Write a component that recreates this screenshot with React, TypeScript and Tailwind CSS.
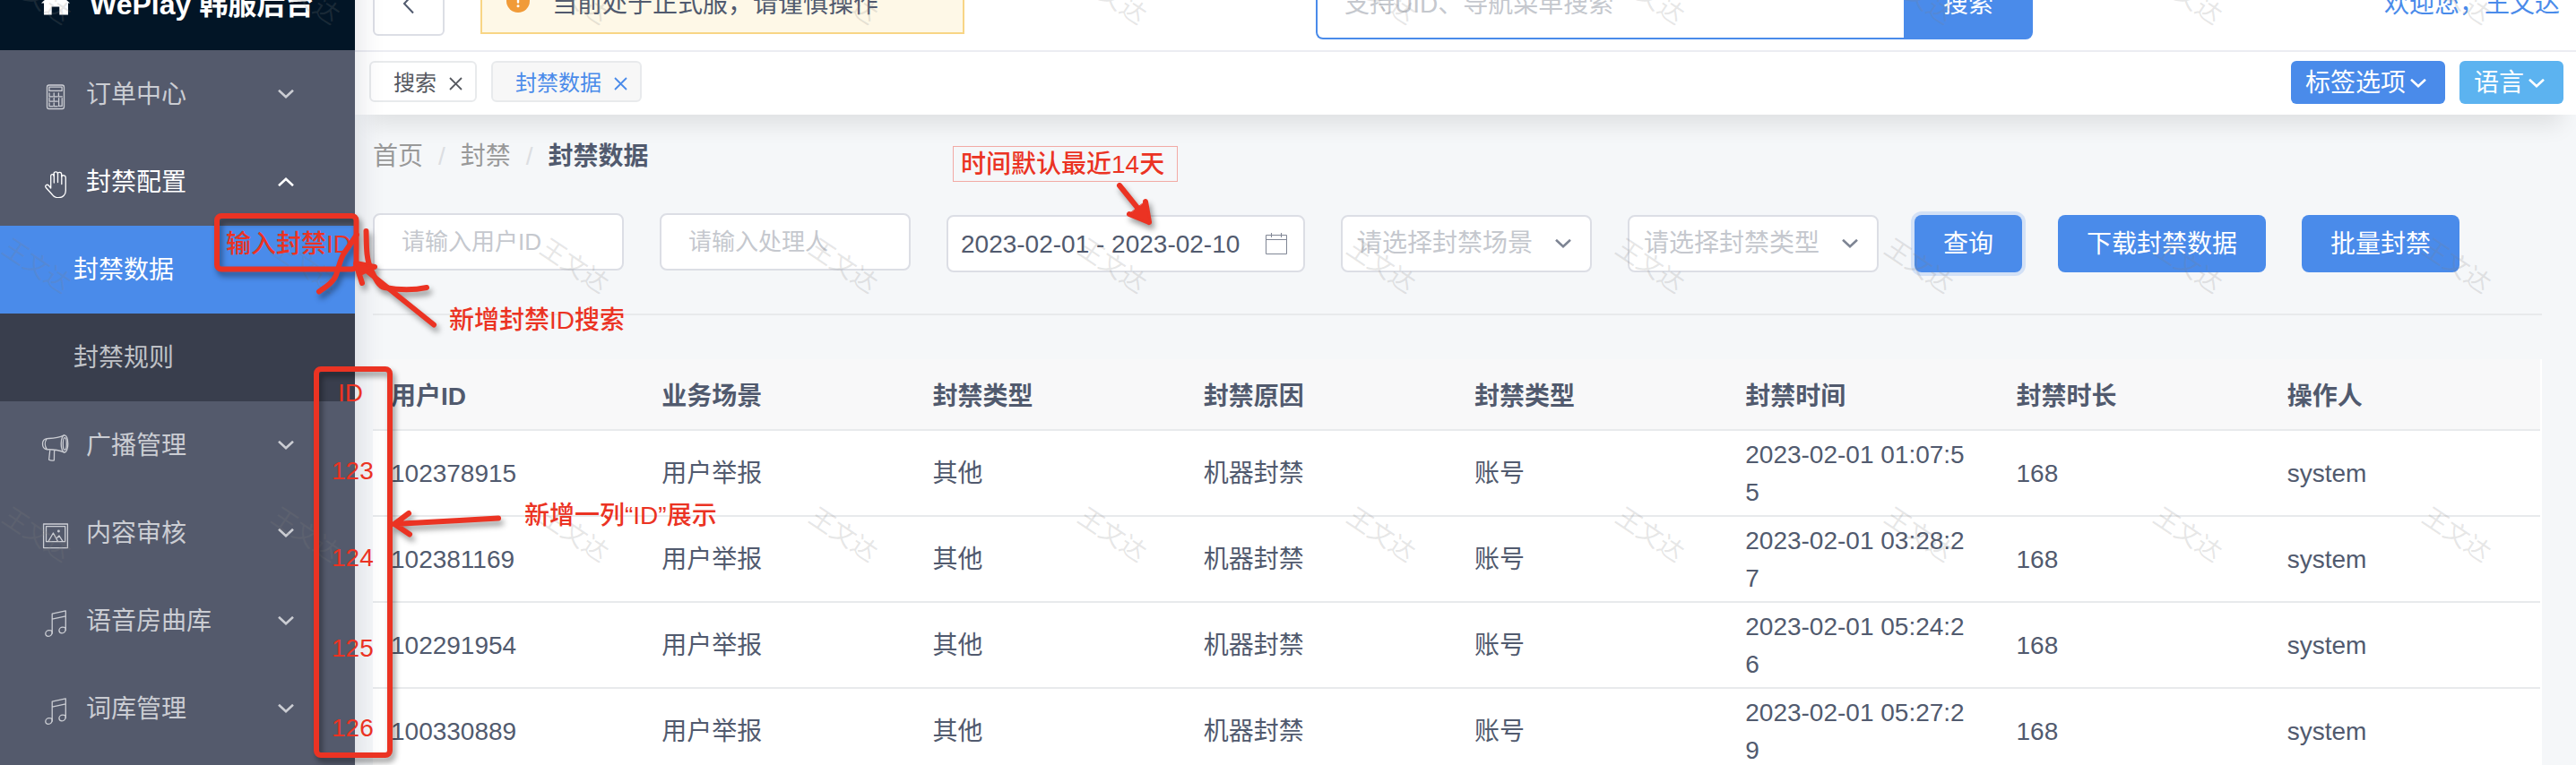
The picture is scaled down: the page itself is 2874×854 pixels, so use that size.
import React from "react";

const fontStack =
  "font-['Liberation_Sans','Noto_Sans_CJK_SC',sans-serif]";

function Chevron({ className = "", up = false }: { className?: string; up?: boolean }) {
  return (
    <svg className={`h-2.5 w-[18px] shrink-0 ${className}`} viewBox="0 0 18 10" fill="none" stroke="currentColor" strokeWidth="2.6" aria-hidden="true">
      <path d={up ? "M1 9.2 9 1.8 17 9.2" : "M1 .8 9 8.2 17 .8"} />
    </svg>
  );
}

function CloseIcon() {
  return (
    <svg className="h-[15px] w-[15px] shrink-0" viewBox="0 0 15 15" fill="none" stroke="currentColor" strokeWidth="1.8" aria-hidden="true">
      <path d="M1 1 14 14M14 1 1 14" />
    </svg>
  );
}

function MenuIcon({ children }: { children: React.ReactNode }) {
  return (
    <svg className="h-9 w-8 shrink-0" viewBox="0 0 32 36" fill="none" stroke="currentColor" strokeWidth="1.3" strokeLinejoin="round" strokeLinecap="round" aria-hidden="true">
      {children}
    </svg>
  );
}

const CalculatorIcon = () => (
  <MenuIcon>
    <rect x="6.5" y="8" width="19" height="26.5" rx="2.2" />
    <rect x="8.9" y="10.2" width="14.2" height="4.2" />
    <path d="M9 17v3.8h4M14.2 17v3.8h4M19.4 17v3.8h4M9 22.4v3.8h4M14.2 22.4v3.8h4M9 27.8v3.8h4M14.2 27.8v3.8h4M19.6 22.6v8.8h3.6v-8.8" />
  </MenuIcon>
);

const HandIcon = () => (
  <MenuIcon>
    <path d="M10.7 25V11.5c0-2.6 3.4-2.6 3.4 0V9c0-2.8 4.3-2.8 4.3 0 0-2.4 4.3-2.2 4.3.6V12c.4-1.8 4.6-1.8 4.6 1.4V28c0 4.5-3.3 7.7-8 7.7-3.5 0-5.3-1-7-3.4L5.3 24.5c-1.6-2.3.9-4.2 3-2.5z" />
    <path d="M14.3 9.5V19M18.5 9V18.5M22.8 11V20.5" />
  </MenuIcon>
);

const MegaphoneIcon = () => (
  <MenuIcon>
    <ellipse cx="26" cy="16.4" rx="3.8" ry="9.6" />
    <ellipse cx="26.3" cy="16.4" rx="2" ry="6.8" />
    <path d="M25.5 6.8C18 10.5 12 10.3 6.3 10.6c-3 .4-4.8 3-4.8 6 0 3.2 1.8 5.9 5 6.2 6-.2 12 .2 19 3.2M6.3 10.6c-2.6 3.6-2.6 8.6.2 12.2M9.8 23l-1.2 11.2c1.8 1 4 1 5.8.6L14.6 23.2" />
  </MenuIcon>
);

const PictureIcon = () => (
  <MenuIcon>
    <rect x="2.6" y="8" width="26.8" height="26.6" />
    <rect x="5.5" y="10.6" width="21.2" height="17" />
    <path d="M8 27.4 13.4 18 18.5 27.4M16.8 24.2 20 21 24 27.4" />
    <circle cx="19.4" cy="16" r=".8" />
  </MenuIcon>
);

const MusicIcon = () => (
  <MenuIcon>
    <path d="M12.2 32V10.2L27.3 6.8V28.5M12.2 16.2 27.3 12.8" />
    <path d="M12.2 30.5c0 3-2 4.8-4.2 4.8s-3.2-1.5-3.2-3c0-2 2-3.6 4-3.6 1.8 0 3.4.8 3.4 1.8zM27.3 27c0 3-2 4.8-4.2 4.8s-3.2-1.5-3.2-3c0-2 2-3.6 4-3.6 1.8 0 3.4.8 3.4 1.8z" />
  </MenuIcon>
);

const menuTop = [
  { label: "订单中心", icon: <CalculatorIcon />, open: false },
  { label: "封禁配置", icon: <HandIcon />, open: true },
];

const menuBottom = [
  { label: "广播管理", icon: <MegaphoneIcon />, open: false },
  { label: "内容审核", icon: <PictureIcon />, open: false },
  { label: "语音房曲库", icon: <MusicIcon />, open: false },
  { label: "词库管理", icon: <MusicIcon />, open: false },
];

function MenuItem({ label, icon, open }: { label: string; icon: React.ReactNode; open: boolean }) {
  return (
    <button
      type="button"
      aria-expanded={open}
      className={`flex h-[98px] w-full items-center pr-[68px] pl-[46px] text-left ${open ? "text-white" : "text-[#cbcdd3]"}`}
    >
      {icon}
      <span className="ml-[18px] flex-1 pt-0.5">{label}</span>
      <Chevron up={open} />
    </button>
  );
}

function Sidebar() {
  return (
    <aside className="relative z-10 w-[396px] shrink-0 bg-[#545a6c] shadow-[4px_0_28px_rgba(30,40,70,0.13)]">
      <div className="flex h-26 items-center bg-[#021526] pl-[46px] text-[32px] font-bold text-white">
        <svg className="mr-[22px] h-8 w-8" viewBox="0 0 32 32" fill="currentColor" aria-hidden="true">
          <path d="M16 1 0 15.5h3V28.5h8.7V19.5h8.6v9H30V15.5h2z" />
        </svg>
        <span className="pt-0.5">WePlay 韩服后台</span>
      </div>
      <nav>
        {menuTop.map((m) => (
          <MenuItem key={m.label} {...m} />
        ))}
        <a href="#data" className="flex h-[98px] items-center bg-[#4a8bea] pt-0.5 pl-[82px] text-white">
          封禁数据
        </a>
        <a href="#rules" className="flex h-[98px] items-center bg-[#393e4d] pt-0.5 pl-[82px] text-[#bfc1c6]">
          封禁规则
        </a>
        {menuBottom.map((m) => (
          <MenuItem key={m.label} {...m} />
        ))}
      </nav>
    </aside>
  );
}

function Header() {
  return (
    <header className="flex h-[106px] items-center justify-between border-b-2 border-[#ebecf2] bg-white pr-[18px] pl-5">
      <div className="flex items-center gap-10">
        <button type="button" aria-label="返回" className="flex h-[72px] w-20 items-center justify-center rounded-md border-2 border-[#dcdee5] text-[#515a6e]">
          <svg className="h-6 w-4" viewBox="0 0 16 24" fill="none" stroke="currentColor" strokeWidth="2" aria-hidden="true">
            <path d="M13 1.5 3 12 13 22.5" />
          </svg>
        </button>
        <div role="status" className="flex h-[68px] w-[540px] items-center border-2 border-[#f8d585] bg-[#fef8e7] pl-[27px]">
          <svg className="mr-[25px] h-8 w-[26px] shrink-0" viewBox="0 0 26 32" aria-hidden="true">
            <circle cx="13" cy="13" r="13" fill="#f19b38" />
            <path d="M13 5.5v9" stroke="#fff" strokeWidth="2.4" strokeLinecap="round" />
            <circle cx="13" cy="18.8" r="1.5" fill="#fff" />
          </svg>
          <span className="pt-0.5">当前处于正式服，请谨慎操作</span>
        </div>
      </div>
      <form className="flex h-20 w-[800px]" onSubmit={(e) => e.preventDefault()}>
        <input
          aria-label="搜索"
          placeholder="支持UID、导航菜单搜索"
          className="min-w-0 flex-1 rounded-l-lg border-2 border-r-0 border-[#4a8bea] bg-white pt-0.5 pl-[30px] outline-none placeholder:text-[#c5c8ce]"
        />
        <button type="submit" className="w-36 rounded-r-lg bg-[#4a8bea] pt-0.5 text-white">
          搜索
        </button>
      </form>
      <a href="#me" className="pt-0.5 text-[#4a8bea]">
        欢迎您，王文达
      </a>
    </header>
  );
}

function TagBar() {
  return (
    <div className="flex h-[70px] items-start justify-between bg-white pt-2.5 pr-3.5 pl-4 shadow-[0_28px_24px_-16px_rgba(0,0,0,0.09)]">
      <div className="flex gap-4 text-2xl leading-none">
        <button type="button" className="flex h-[46px] items-center gap-3.5 rounded-md border-2 border-[#e8eaec] bg-white pt-1 pr-3.5 pl-[25px] text-[#55585f]">
          搜索
          <CloseIcon />
        </button>
        <button type="button" className="flex h-[46px] items-center gap-3.5 rounded-md border-2 border-[#e8eaec] bg-[#f7f7f7] pt-1 pr-3.5 pl-[25px] text-[#4a8bea]">
          封禁数据
          <CloseIcon />
        </button>
      </div>
      <div className="flex gap-4 text-white">
        <button type="button" className="flex h-12 items-center gap-[5px] rounded-md bg-[#4a8bea] pt-0.5 pr-[21px] pl-4">
          标签选项
          <Chevron />
        </button>
        <button type="button" className="flex h-12 items-center gap-[5px] rounded-md bg-[#5cb3f0] pt-0.5 pr-[21px] pl-4">
          语言
          <Chevron />
        </button>
      </div>
    </div>
  );
}

function FilterSelect({ label }: { label: string }) {
  return (
    <div className="relative w-[280px]">
      <select
        aria-label={label}
        defaultValue=""
        className="h-16 w-full appearance-none rounded-lg border-2 border-[#dcdee5] bg-white pl-4 text-[#c5c8ce] outline-none"
      >
        <option value="">{label}</option>
      </select>
      <Chevron className="pointer-events-none absolute top-[27px] right-[23px] text-[#7d8493]" />
    </div>
  );
}

function Filters() {
  const input =
    "h-16 w-[280px] rounded-lg border-2 border-[#dcdee5] bg-white pl-[30px] text-[26px] outline-none placeholder:text-[#c5c8ce]";
  const button = "h-16 rounded-lg bg-[#4a8bea] px-8 pt-0.5 text-white";
  return (
    <form className="mt-[42px] flex items-end gap-10" onSubmit={(e) => e.preventDefault()}>
      <div className="flex gap-10 pb-0.5">
        <input aria-label="用户ID" placeholder="请输入用户ID" className={input} />
        <input aria-label="处理人" placeholder="请输入处理人" className={input} />
      </div>
      <div className="relative w-[400px]">
        <input
          aria-label="封禁时间"
          defaultValue="2023-02-01 - 2023-02-10"
          className="h-16 w-full rounded-lg border-2 border-[#dcdee5] bg-white pt-0.5 pl-3.5 outline-none"
        />
        <svg className="pointer-events-none absolute top-5 right-5 h-6 w-6" viewBox="0 0 24 24" fill="none" stroke="#808695" strokeWidth="1" aria-hidden="true">
          <path d="M.5 2.5h23v21H.5zM.5 7.5h23M6.5 0v5M17.5 0v5" />
        </svg>
      </div>
      <FilterSelect label="请选择封禁场景" />
      <FilterSelect label="请选择封禁类型" />
      <button type="submit" className={`${button} ring-4 ring-[#4a8bea]/20`}>
        查询
      </button>
      <button type="button" className={button}>
        下载封禁数据
      </button>
      <button type="button" className={button}>
        批量封禁
      </button>
    </form>
  );
}

const columns = ["用户ID", "业务场景", "封禁类型", "封禁原因", "封禁类型", "封禁时间", "封禁时长", "操作人"];

const rows = [
  ["102378915", "用户举报", "其他", "机器封禁", "账号", "2023-02-01 01:07:55", "168", "system"],
  ["102381169", "用户举报", "其他", "机器封禁", "账号", "2023-02-01 03:28:27", "168", "system"],
  ["102291954", "用户举报", "其他", "机器封禁", "账号", "2023-02-01 05:24:26", "168", "system"],
  ["100330889", "用户举报", "其他", "机器封禁", "账号", "2023-02-01 05:27:29", "168", "system"],
];

function DataTable() {
  return (
    <div className="mt-[49px] border-r-2 border-white bg-white">
      <table className="w-full table-fixed border-separate border-spacing-0">
        <thead>
          <tr>
            {columns.map((c, i) => (
              <th key={i} className="h-20 border-b-2 border-[#e8eaec] bg-[#f8f8f9] px-5 pt-1.5 text-left font-bold">
                {c}
              </th>
            ))}
          </tr>
        </thead>
        <tbody>
          {rows.map((r) => (
            <tr key={r[0]}>
              {r.map((cell, i) => (
                <td key={i} className="h-24 border-b-2 border-[#e8eaec] pt-px pr-6 pl-5 leading-[42px] break-all">
                  {cell}
                </td>
              ))}
            </tr>
          ))}
        </tbody>
      </table>
    </div>
  );
}

function Watermark() {
  return (
    <div aria-hidden="true" className="pointer-events-none absolute inset-0 z-20 overflow-hidden">
      <div className="-mt-[34px] -mr-[300px] grid grid-cols-[repeat(auto-fill,300px)]">
        {Array.from({ length: 30 }, (_, i) => (
          <div key={i} className="flex h-[300px] items-start pt-2">
            <span className="rotate-[34deg] font-['Noto_Sans_CJK_SC',sans-serif] text-[28px] leading-[42px] text-[#808080]/20">
              王文达
            </span>
          </div>
        ))}
      </div>
    </div>
  );
}

function Annotations() {
  const note = "absolute leading-8 font-medium whitespace-nowrap text-[#eb3323]";
  return (
    <div className="pointer-events-none absolute inset-0 z-30 overflow-hidden">
      <svg
        className="absolute top-0 left-0 h-[854px] w-[1400px] drop-shadow-[3px_5px_3px_rgba(0,0,0,0.4)]"
        viewBox="0 0 1400 854"
        fill="none"
        stroke="#eb3323"
        strokeWidth="6"
        strokeLinecap="round"
        strokeLinejoin="round"
        aria-hidden="true"
      >
        <rect x="242" y="241" width="155.5" height="59.5" rx="5" />
        <rect x="353" y="412" width="82" height="431" rx="5" />
        <path d="M356 325.5C364 320 372 315 375 307 378 298 379 292 383 284L398 262" />
        <path d="M408.5 258C409 272 408 288 414 301 419 312 423 320 429 321 446 324 462 324 476 321" />
        <path d="M484 362.5 405 299M418 298 397 294 404 316" />
        <path d="M397 294 420 298 404 306z" fill="#eb3323" strokeWidth="2" />
        <path d="M556 578.5 440 585M456 573 440 585 457 596.5" />
        <path d="M1249 207 1282 248M1278 225 1282 248 1260 239" />
        <path d="M1278 225 1282 248 1260 239z" fill="#eb3323" strokeWidth="1" />
      </svg>
      <span className={`${note} top-[257px] left-[252px]`}>输入封禁ID</span>
      <span className={`${note} top-[342px] left-[501px]`}>新增封禁ID搜索</span>
      <span className={`${note} top-[560px] left-[585px]`}>新增一列“ID”展示</span>
      <span className={`${note} top-[163px] left-[1063px] h-10 w-[251px] border border-[#f2aaa5] pl-2 leading-10`}>
        时间默认最近14天
      </span>
      <span className={`${note} top-[423px] left-[377px]`}>ID</span>
      <span className={`${note} top-[510px] left-[370px]`}>123</span>
      <span className={`${note} top-[607px] left-[370px]`}>124</span>
      <span className={`${note} top-[708px] left-[370px]`}>125</span>
      <span className={`${note} top-[797px] left-[370px]`}>126</span>
    </div>
  );
}

export default function App() {
  return (
    <div className={`relative h-screen overflow-hidden bg-[#f5f7f9] text-[28px] leading-[42px] text-[#515a6e] ${fontStack}`}>
      <div className="-mt-12 flex min-h-full">
        <Sidebar />
        <div className="min-w-0 flex-1">
          <Header />
          <TagBar />
          <main className="pt-[26px] pr-[38px] pl-5">
            <nav aria-label="面包屑" className="flex text-[#999]">
              <a href="#home">首页</a>
              <span className="mx-[17px] text-[#dcdee2]">/</span>
              <a href="#ban">封禁</a>
              <span className="mx-[17px] text-[#dcdee2]">/</span>
              <span className="font-bold text-[#515a6e]">封禁数据</span>
            </nav>
            <Filters />
            <hr className="mt-[46px] border-t-2 border-[#e8eaec]" />
            <DataTable />
          </main>
        </div>
      </div>
      <Watermark />
      <Annotations />
    </div>
  );
}
